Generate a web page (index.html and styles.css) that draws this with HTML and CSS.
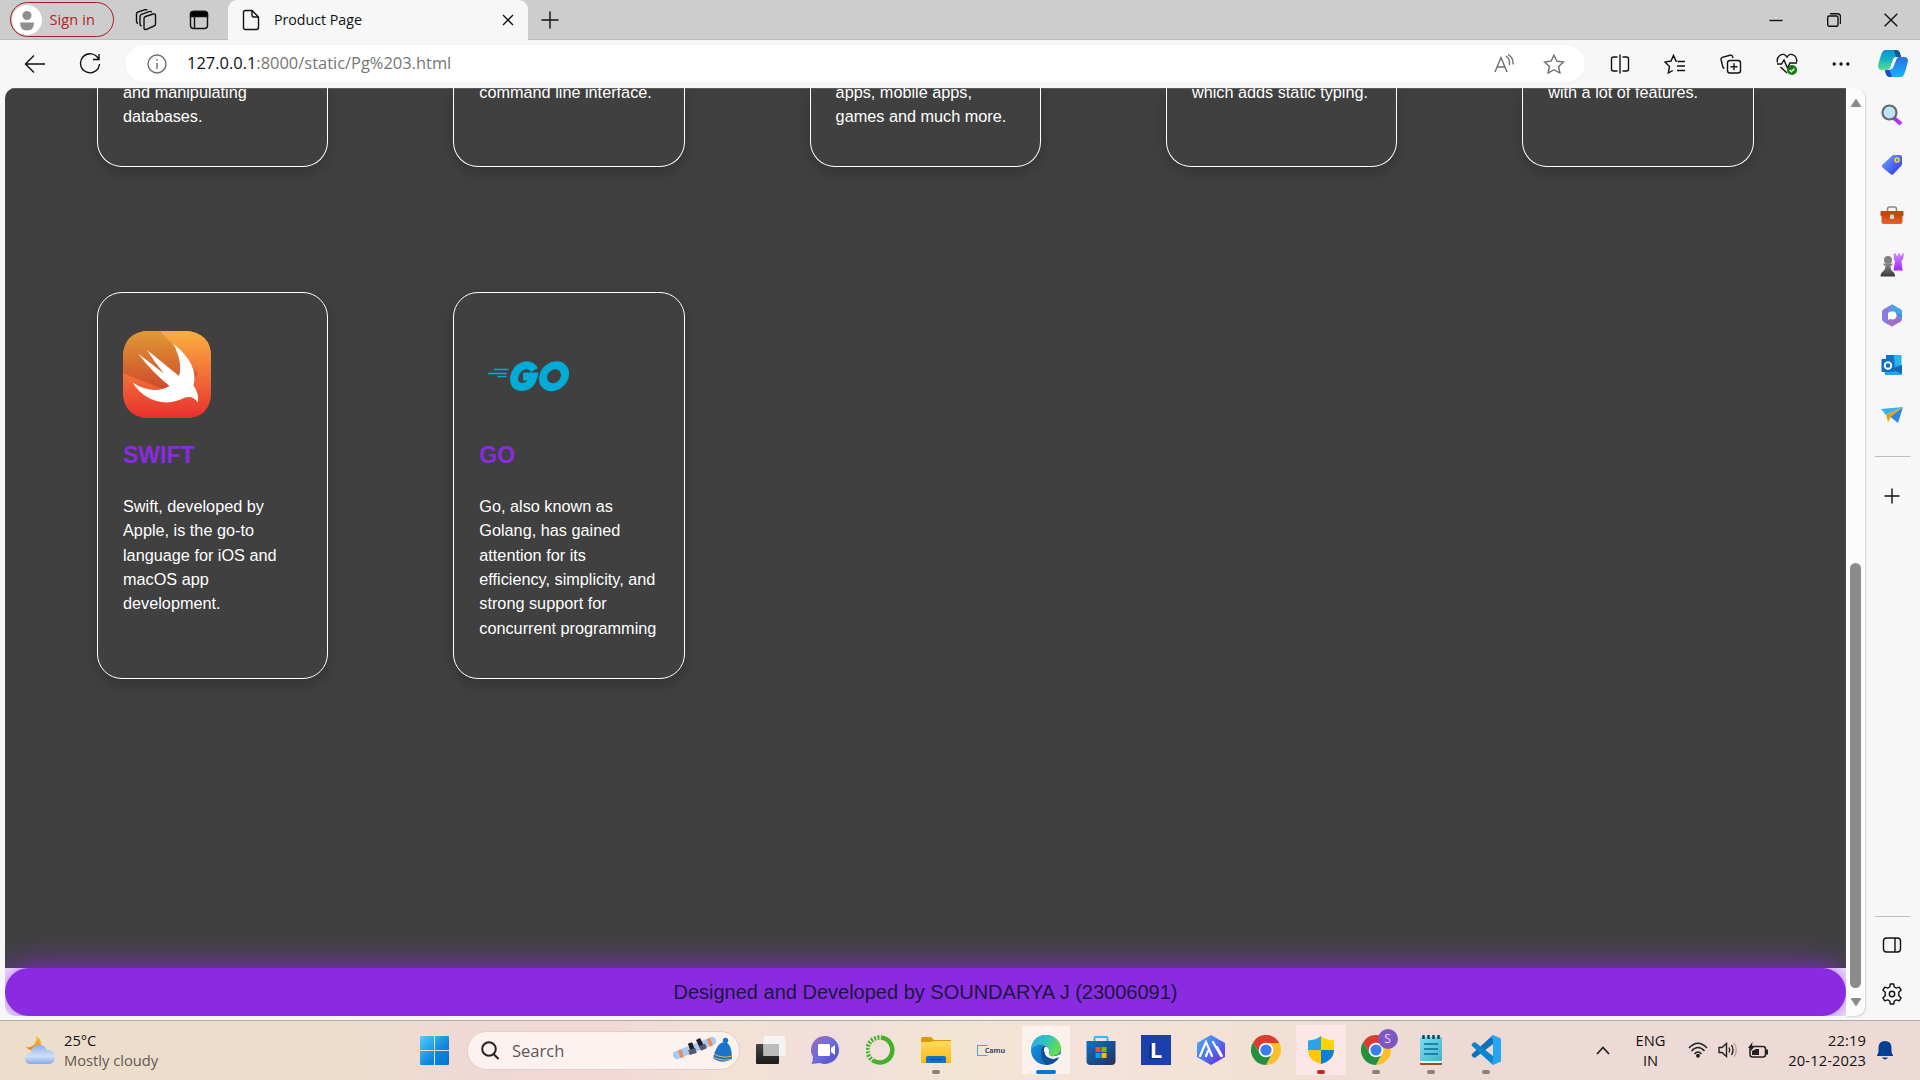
FILE: index.html
```html
<!DOCTYPE html>
<html lang="en">
<head>
<meta charset="utf-8">
<title>Product Page</title>
<link rel="stylesheet" href="styles.css">
</head>
<body>
<svg width="0" height="0" class="defs">
  <defs>
    <linearGradient id="swiftBg" x1="0" y1="0" x2="0" y2="1"><stop offset="0" stop-color="#fbb03f"/><stop offset="1" stop-color="#e9302f"/></linearGradient>
    <linearGradient id="swiftShade" x1="0" y1="0" x2="0" y2="1"><stop offset="0" stop-color="#e09a35"/><stop offset="1" stop-color="#cc3e2a"/></linearGradient>
    <linearGradient id="win" x1="0" y1="0" x2="1" y2="1"><stop offset="0" stop-color="#4fd0fc"/><stop offset=".6" stop-color="#0f86de"/><stop offset="1" stop-color="#0073d0"/></linearGradient>
    <linearGradient id="copA" x1="0" y1="0" x2="0" y2="1"><stop offset="0" stop-color="#0d8fd8"/><stop offset=".5" stop-color="#16b5c0"/><stop offset="1" stop-color="#63dd8e"/></linearGradient>
    <linearGradient id="copB" x1="0" y1="0" x2="0" y2="1"><stop offset="0" stop-color="#2a6fe0"/><stop offset="1" stop-color="#17b3fb"/></linearGradient>
    <linearGradient id="tag" x1="0" y1="0" x2="1" y2="1"><stop offset="0" stop-color="#6fb0ff"/><stop offset="1" stop-color="#2b2bea"/></linearGradient>
    <linearGradient id="box" x1="0" y1="0" x2="0" y2="1"><stop offset="0" stop-color="#c2400f"/><stop offset="1" stop-color="#e8622c"/></linearGradient>
    <linearGradient id="rook" x1="0" y1="0" x2="0" y2="1"><stop offset="0" stop-color="#c98cf8"/><stop offset="1" stop-color="#a822f4"/></linearGradient>
    <linearGradient id="pawn" x1="0" y1="0" x2="0" y2="1"><stop offset="0" stop-color="#8a8a8a"/><stop offset="1" stop-color="#3a3a3a"/></linearGradient>
    <linearGradient id="chat" x1="0" y1="0" x2="1" y2="1"><stop offset="0" stop-color="#a06bb8"/><stop offset=".5" stop-color="#6d6bdc"/><stop offset="1" stop-color="#4a52c4"/></linearGradient>
    <linearGradient id="folder" x1="0" y1="0" x2="0" y2="1"><stop offset="0" stop-color="#ffdb62"/><stop offset="1" stop-color="#fbb80d"/></linearGradient>
    <linearGradient id="edgeTop" x1="0" y1="0" x2="1" y2=".4"><stop offset="0" stop-color="#2aa5e6"/><stop offset=".5" stop-color="#2fc2c4"/><stop offset="1" stop-color="#62de4c"/></linearGradient>
    <linearGradient id="edgeLow" x1="0" y1="0" x2="1" y2="1"><stop offset="0" stop-color="#1a9be8"/><stop offset="1" stop-color="#0c57ac"/></linearGradient>
    <linearGradient id="store" x1="0" y1="0" x2="1" y2="1"><stop offset="0" stop-color="#0e72c4"/><stop offset="1" stop-color="#22305e"/></linearGradient>
    <linearGradient id="hexa" x1="0" y1="0" x2="1" y2="1"><stop offset="0" stop-color="#48b3f4"/><stop offset=".5" stop-color="#4f72f0"/><stop offset="1" stop-color="#6a1de8"/></linearGradient>
    <linearGradient id="cloud" x1="0" y1="0" x2="0" y2="1"><stop offset="0" stop-color="#8fb2ee"/><stop offset=".6" stop-color="#cfdff8"/><stop offset="1" stop-color="#82a8ea"/></linearGradient>
    <linearGradient id="moon" x1="0" y1="0" x2="0" y2="1"><stop offset="0" stop-color="#f8c544"/><stop offset="1" stop-color="#ee8417"/></linearGradient>
    <linearGradient id="note" x1="0" y1="0" x2="1" y2="1"><stop offset="0" stop-color="#7be0f2"/><stop offset="1" stop-color="#3fb3d4"/></linearGradient>
    <linearGradient id="taskDark" x1="0" y1="0" x2="0" y2="1"><stop offset="0" stop-color="#454545"/><stop offset="1" stop-color="#1c1c1c"/></linearGradient>
    <g id="chrome">
      <path d="M15 8H28.300L28 7.500A15 15 0 0 0 2 7.500L8.900 18.500Z" fill="#dd3b30"/>
      <path d="M21.100 18.500 15 30A15 15 0 0 0 28.300 8H15Z" fill="#fcc02c"/>
      <path d="M8.900 18.500 2 7.500A15 15 0 0 0 15 30L21.100 18.500Z" fill="#23913f"/>
      <circle cx="15" cy="15" r="7.300" fill="#fff"/><circle cx="15" cy="15" r="5.600" fill="#3b7ded"/>
    </g>
  </defs>
</svg>

<header class="titlebar">
  <div class="signin">
    <svg width="30" height="30" viewBox="0 0 30 30"><circle cx="15" cy="15" r="15" fill="#fff"/><circle cx="15" cy="10.500" r="4.500" fill="#8f8f8f"/><path d="M8 17.500h14q0 8-7 8t-7-8Z" fill="#8f8f8f"/></svg>
    <span>Sign in</span>
  </div>
  <svg class="ic workspaces" width="22" height="22" viewBox="0 0 22 22"><path d="M9 9.500q0-1.500 1.500-2L18 5q2.500-.700 2.500 1.500V15q0 1.500-1.500 2l-7.500 3.300Q9 21 9 19Z"/><path d="M6.500 17Q5 16.500 5 15V7.500Q5 6 6.500 5.400L14 2.600q2-.600 2.700.700M3 14.500Q1.500 14 1.500 12.500V5Q1.500 3.500 3 3l6.500-2.200q2-.500 2.600.600"/></svg>
  <svg class="ic tabmenu" width="20" height="20" viewBox="0 0 20 20"><rect x="1.500" y="1.500" width="17" height="17" rx="3"/><path d="M1.500 6.500v-2q0-3 3-3h11q3 0 3 3v2Z" fill="#000"/><path d="M5.500 6v12.500"/></svg>
  <div class="tab">
    <svg class="ic" width="18" height="22" viewBox="0 0 18 22"><path d="M3.500 1.500H10l6.500 6.500v10.500q0 2-2 2h-11q-2 0-2-2v-15q0-2 2-2ZM10 1.500V6q0 2 2 2h4.500"/></svg>
    <span>Product Page</span>
    <svg class="ic close" width="12" height="12" viewBox="0 0 12 12"><path d="m1 1 10 10M11 1 1 11"/></svg>
  </div>
  <svg class="ic plus" width="18" height="18" viewBox="0 0 18 18"><path d="M9 .500v17M.500 9h17"/></svg>
  <div class="winbtns">
    <svg class="ic" width="14" height="14" viewBox="0 0 14 14"><path d="M.500 7.500h13"/></svg>
    <svg class="ic" width="14" height="14" viewBox="0 0 14 14"><rect x=".7" y="3" width="10.300" height="10.300" rx="1.500"/><path d="M3 .700h7.500q3 0 3 3V11"/></svg>
    <svg class="ic" width="14" height="14" viewBox="0 0 14 14"><path d="m.700.700 12.600 12.600M13.300.700.700 13.300"/></svg>
  </div>
</header>

<div class="toolbar">
  <svg class="ic back" width="22" height="20" viewBox="0 0 22 20"><path d="M21 10H1.500M10 1.500 1.500 10l8.500 8.500"/></svg>
  <svg class="ic reload" width="22" height="22" viewBox="0 0 22 22"><path d="M19.500 6A9.500 9.500 0 1 0 20.500 11M20 1v5.500h-6"/></svg>
  <div class="address">
    <svg class="ic grey" width="20" height="20" viewBox="0 0 20 20"><circle cx="10" cy="10" r="9"/><path d="M10 9v6M10 5v1.800"/></svg>
    <span class="url"><b>127.0.0.1</b>:8000/static/Pg%203.html</span>
    <svg class="ic grey read" width="20" height="20" viewBox="0 0 20 20"><path d="m1 18 6-14.500L13 18M3 13h8M12 2q4 2.500 3.500 9M14 .500q5.500 3 5 10"/></svg>
    <svg class="ic grey" width="22" height="20" viewBox="0 0 22 20"><path d="m11 1.200 2.900 6 6.500.800-4.800 4.500 1.300 6.500-5.900-3.300-5.900 3.300 1.300-6.500L1.600 8l6.500-.800Z"/></svg>
  </div>
  <div class="tools">
    <svg class="ic" width="20" height="20" viewBox="0 0 20 20"><path d="M7.500 3h-4q-2 0-2 2v10q0 2 2 2h4M12.500 3h4q2 0 2 2v10q0 2-2 2h-4M10 .500v19"/></svg>
    <svg class="ic" width="22" height="20" viewBox="0 0 22 20"><path d="M13.500 7.200 12 7l-2.500-5.600L7 7 1 8l4.500 4.500L4.300 19l4.500-2.500M14 7.500h7M13 12h8M13 16.500h8"/></svg>
    <svg class="ic" width="22" height="20" viewBox="0 0 22 20"><rect x="7.500" y="6.500" width="13" height="12.500" rx="2.500"/><path d="M14 9.300v7M10.500 12.800h7M4.500 14.500 3 13.500 1 5.500q-.300-1.600 1.300-2.200L10 1.200q2-.400 2.500 1l.500 2"/></svg>
    <svg class="ic" width="22" height="22" viewBox="0 0 22 22"><path d="M1.500 9.500Q.500 5 3.500 2.700 8-.500 11 4q3-4.500 7.500-1.300 3 2.300 2 6.300M1 11h4.500L8 7l3.500 8 2.500-5h7M4.500 14 11 20"/><circle cx="16" cy="17" r="5" fill="#107c10" stroke="none"/><path d="m13.700 17 1.600 1.700 3-3" stroke="#fff"/></svg>
    <svg width="18" height="20" viewBox="0 0 18 20"><g fill="#111"><circle cx="2.200" cy="10" r="1.700"/><circle cx="9" cy="10" r="1.700"/><circle cx="15.800" cy="10" r="1.700"/></g></svg>
  </div>
  <svg class="copilot" width="30" height="27" viewBox="0 0 30 27"><path d="M7 0h11q3 0 4 3l1 4h-4q-3 0-4 3l-2.500 7q-1 3-4 3H4q-4 0-4-4Q2 7 4 2.500 5 0 7 0Z" fill="url(#copA)"/><path d="M23 27H12q-3 0-4-3l-1-4h3.500q3 0 4-3L17 10q1-3 4-3h5q4 0 4 4-2 9-4 13.500-1 2.500-3 2.500Z" fill="url(#copB)"/><path d="M16 0h2q3 0 4 3l1 4h-5Z" fill="#12588d"/><path d="M14 27h-2q-3 0-4-3l-1-4h4.500Z" fill="#1c45d4"/><path d="M18 7q-2 0-3 3l-3.500 9.500q3 0 4-3L18.500 9q.5-1.500 2-2Z" fill="#fff"/></svg>
</div>

<div class="middle">
  <main class="page">
    <section class="cards">
      <article class="card cut"><p>and manipulating databases.</p></article>
      <article class="card cut"><p>command line interface.</p></article>
      <article class="card cut"><p>apps, mobile apps, games and much more.</p></article>
      <article class="card cut"><p>which adds static typing.</p></article>
      <article class="card cut"><p>with a lot of features.</p></article>
      <article class="card">
        <svg class="logo" width="88" height="87" viewBox="0 0 88 87"><rect width="88" height="87" rx="25" fill="url(#swiftBg)"/><path d="M25 0H38L75 42 60 66 0 42V25Q1 1 25 0Z" fill="url(#swiftShade)"/><path d="M0 42 40 80 82 66 74 40 37 0H63Q88 2 88 25V62Q87 87 63 87H25Q1 86 0 62Z" fill="url(#swiftBg)"/><path d="M50.500 13Q76 33 70.500 54.500 76 62 75 71.500 70 64 62 66.500 53 71 44 71.500 22 71 9.500 51.500 30 64.500 46.500 55 30 42 15 22.500L37 39.500 41 42.500Q32 32 24 19L56 45Q60 32 50.500 13Z" fill="#fff"/></svg>
        <h3>SWIFT</h3>
        <p>Swift, developed by Apple, is the go-to language for iOS and macOS app development.</p>
      </article>
      <article class="card">
        <svg class="logo" width="98" height="87" viewBox="0 0 98 87"><g stroke="#00acd7" stroke-width="1.700"><path d="M15 38.500h14.500M9 42.500h19M18.500 45.500h9"/></g><g fill="none" stroke="#00acd7" stroke-width="8"><path d="M55.500 39Q52 33 45.500 34.500 36.500 37 35 47 35 56 43.500 56 52.500 55 54.500 45.500H44"/><ellipse cx="75" cy="45.200" rx="10.800" ry="11" transform="translate(8 0) skewX(-10)"/></g></svg>
        <h3>GO</h3>
        <p>Go, also known as Golang, has gained attention for its efficiency, simplicity, and strong support for concurrent programming</p>
      </article>
    </section>
    <footer>Designed and Developed by SOUNDARYA J (23006091)</footer>
  </main>
  <div class="scroll">
    <svg width="12" height="10" viewBox="0 0 12 10"><path d="M6 .500 11 8q.500 1-.500 1h-9Q.500 9 1 8Z" fill="#8b8b8b"/></svg>
    <div class="track"><div class="thumb"></div></div>
    <svg width="12" height="10" viewBox="0 0 12 10"><path d="M6 9.500 11 2q.500-1-.500-1h-9Q.500 1 1 2Z" fill="#8b8b8b"/></svg>
  </div>
  <aside class="side">
    <svg width="22" height="22" viewBox="0 0 22 22"><path d="m13 14 7 6" stroke="#b52ff0" stroke-width="4"/><circle cx="8.500" cy="8.500" r="7" fill="#bfe3fb" stroke="#6a6a6a" stroke-width="2.200"/></svg>
    <svg width="22" height="22" viewBox="0 0 22 22"><path d="M12 1h7q2 0 2 2v7q0 1-1 2l-7.500 8q-1.500 1.500-3 0L1.500 13.500q-1.500-1.500 0-3Z" fill="url(#tag)"/><circle cx="16" cy="6" r="2" fill="#5a7df0" stroke="#ffd22e" stroke-width="1.600"/></svg>
    <svg width="24" height="20" viewBox="0 0 24 20"><path d="M7.500 6V4q0-2 2-2h5q2 0 2 2v2" fill="none" stroke="#8c8c8c" stroke-width="1.600"/><rect x="1.500" y="8" width="21" height="11" rx="2" fill="url(#box)"/><rect x=".5" y="6" width="23" height="5" rx="1" fill="#c9430f"/><rect x="10" y="9.500" width="4" height="4.500" rx="1" fill="#d5d5d5"/></svg>
    <svg width="24" height="24" viewBox="0 0 24 24"><path d="M13.500.500H16v2h1.800v-2h2.500v2H22v-2h2l-1 6-1.500 1L22 15l1 2.500H13.500L15 8l-1-1Z" fill="url(#rook)"/><circle cx="8" cy="7" r="4" fill="#808080"/><path d="M3.500 10.500h9v2h-2q0 4 1.500 5.500 3 1.500 3 5.500H.500q0-4 3-5.500Q5.500 16.500 5.500 12.500h-2Z" fill="url(#pawn)"/></svg>
    <svg width="22" height="23" viewBox="0 0 22 23"><path d="m11 .500 8 4.500q2 1 2 3v7l-6-3.500Q15 8 11 7.500 9 4 11 .500Z" fill="#3d8fe0"/><path d="M21 8v7q0 2-2 3l-8 4.500Q7 20 6 17l9-5.500 6 3.500Z" fill="#a06bc8"/><path d="M11 .500 3 5Q1 6 1 8v7q0 2 2 3l4 2.500Q8 17 7 14V9l6-7Z" fill="#8a7bdc"/><path d="m11 .500 8 4.500q2 1 2 3v3l-10-3.500L8.500 9Q8 4 11 .500Z" fill="#4aa3e8"/><path d="M3 18q4 1 7-3l3 2-2 5.500Z" fill="#9a72c8"/><circle cx="11.500" cy="11.500" r="4" fill="#fff"/></svg>
    <svg width="22" height="22" viewBox="0 0 22 22"><rect x="5" y="1" width="15.500" height="14" rx="1" fill="#28b4ee"/><path d="M5 1h8v8H5Z" fill="#0f72c4"/><path d="M3 11h18v9q0 1-1 1H4Z" fill="#1ea7e8"/><path d="M21 11v9L10 15Z" fill="#1267b8"/><rect x=".5" y="5" width="13" height="13" rx="1" fill="#0b6ec9"/><circle cx="7" cy="11.500" r="3.300" fill="none" stroke="#fff" stroke-width="1.900"/></svg>
    <svg width="22" height="18" viewBox="0 0 22 18"><path d="M0 3 22 1 5 9Z" fill="#35b2f2"/><path d="M22 1 5 9l2 7L10 11Z" fill="#f0a012"/><path d="M22 1 9.500 11 17 17Z" fill="#2c86e6"/></svg>
    <hr>
    <svg class="ic" width="16" height="16" viewBox="0 0 16 16"><path d="M8 .500v15M.500 8h15"/></svg>
    <span class="grow"></span>
    <hr class="low">
    <svg class="ic" width="20" height="18" viewBox="0 0 20 18"><rect x="1.500" y="2" width="17" height="14" rx="3"/><path d="M13 2v14"/></svg>
    <svg class="ic gear" width="22" height="22" viewBox="0 0 22 22"><path d="M9.300 1h3.400l.600 3 2 1.100 3-1 1.800 3-2.300 2.200v3.400l2.300 2.200-1.800 3-3-1-2 1.100-.600 3H9.300l-.600-3-2-1.100-3 1-1.800-3 2.300-2.200V9.300L1.900 7.100l1.800-3 3 1 2-1.100Z" stroke-linejoin="round"/><circle cx="11" cy="11" r="2.700"/></svg>
  </aside>
</div>

<footer class="taskbar">
  <div class="weather">
    <svg width="30" height="30" viewBox="0 0 30 30"><path d="M11.500.500q8 7 2 13-6 4-13-1 11.500 0 11-12Z" fill="url(#moon)"/><path d="M6 29q-6 0-6-5.500 0-5 5.500-5.500 1.500-8 9-8 5.500 0 7.500 5 8 0 8 7 0 7-7 7Z" fill="url(#cloud)"/></svg>
    <div class="lines"><span>25°C</span><span class="dim">Mostly cloudy</span></div>
  </div>
  <svg class="start" width="29" height="29" viewBox="0 0 29 29"><path d="M1 0h13v14H0V1q0-1 1-1ZM15 0h13q1 0 1 1v13H15ZM0 15h14v14H1q-1 0-1-1ZM15 15h14v13q0 1-1 1H15Z" fill="url(#win)"/></svg>
  <div class="search">
    <svg width="18" height="19" viewBox="0 0 18 19" fill="none" stroke="#222" stroke-width="2"><circle cx="8" cy="8" r="6.800"/><path d="m12.500 13 5 5"/></svg>
    <span>Search</span>
    <svg class="ski" width="62" height="28" viewBox="0 0 62 28"><path d="M5 19 40 5" stroke="#a9cbf2" stroke-width="8" stroke-linecap="round"/><path d="m8 14 2 7.500M36.500 2.500l3 7.500" stroke="#ef8a55" stroke-width="3.500"/><path d="m18 7 3 8M26 3l4 8" stroke="#1d1d22" stroke-width="4.500"/><path d="m17 16.500 7-2M28 12.500l6-2.500" stroke="#555b68" stroke-width="5"/><circle cx="53.500" cy="4.500" r="2.700" fill="#1b74cc"/><path d="M41 22Q45 6 53 6q7 2 7 17-10 6-19-1Z" fill="#1b74cc"/><path d="M42 18q9 5 18 2M41 21q9 5 19 2" stroke="#e8b050" fill="none"/></svg>
  </div>
  <div class="apps">
    <div class="app"><svg width="30" height="28" viewBox="0 0 30 28"><rect y="8" width="23" height="20" rx="1" fill="url(#taskDark)"/><rect x="7.500" y="0" width="22" height="20" rx="1" fill="#f5f5f5" opacity=".93"/><path d="M7.500 8H23v12H7.500Z" fill="#bcbcbc"/></svg></div>
    <div class="app"><svg width="30" height="30" viewBox="0 0 30 30"><path d="M15.500 1A14 14 0 1 1 9 28L.500 29Q2 26 2 22A14 14 0 0 1 15.500 1Z" fill="url(#chat)"/><rect x="7" y="9" width="12" height="12" rx="1.500" fill="#fff"/><path d="m20 13 4-3v10l-4-3Z" fill="#fff"/></svg></div>
    <div class="app"><svg width="30" height="30" viewBox="0 0 30 30" fill="none" stroke="#43b02a"><path d="M15 2.500A12.500 12.500 0 1 1 8 26" stroke-width="4.500"/><path d="M8 26A12.500 12.500 0 0 1 15 2.500" stroke-width="4.500" stroke-dasharray="2 1.400"/></svg></div>
    <div class="app"><svg width="30" height="26" viewBox="0 0 30 26"><path d="M0 2Q0 0 2 0h8l3 3h17v6H0Z" fill="#dc9a09"/><path d="M0 5h10l3-1h16q1 0 1 1v21H0Z" fill="url(#folder)"/><path d="M5 26v-5q0-2 2-2h16q2 0 2 2v5Z" fill="#0e72cc"/><path d="M9 22.500h12" stroke="#0a4f92"/></svg><i class="run"></i></div>
    <div class="app"><span class="camu"><i></i>Camu</span></div>
    <div class="app on"><svg width="30" height="30" viewBox="0 0 30 30"><circle cx="15" cy="15" r="15" fill="url(#edgeLow)"/><path d="M0 14Q2 0 15 0 28 1 30 13q0 7-8 8-6 0-5-3 2-3-1-6-7-6-16 2Z" fill="url(#edgeTop)"/><path d="M10 16q0-5 5-5 4 2 3 6-2 2 2 4 4 1 9-2-1 5-7 9Q10 27 10 16Z" fill="#10519c"/><path d="M15 11.500q4 1.500 3 5.500-1 2 2 4 4 1 9.500-2l.500 3-6 2.500Q14 24 13 16q-.500-4 2-4.500Z" fill="#fbf3f0"/><path d="M13 16q1 8 10 8l5-2Q24 29 16 30q-6-4-6-12 0-3 3-6Z" fill="#10519c"/></svg><i class="run blue"></i></div>
    <div class="app"><svg width="30" height="29" viewBox="0 0 30 29"><path d="M8.500 6V2q0-1 1-1h11q1 0 1 1v4" fill="none" stroke="#29bdf2" stroke-width="2"/><path d="M.500 5h29v20q0 4-4 4h-21q-4 0-4-4Z" fill="url(#store)"/><path d="M9.500 11h5v5h-5Z" fill="#f25022"/><path d="M15.500 11h5v5h-5Z" fill="#7fba00"/><path d="M9.500 17h5v5h-5Z" fill="#00a4ef"/><path d="M15.500 17h5v5h-5Z" fill="#ffb900"/></svg></div>
    <div class="app"><span class="ell">L</span></div>
    <div class="app"><svg width="28" height="30" viewBox="0 0 28 30"><path d="M14 0 28 8v14l-14 8L0 22V8Z" fill="url(#hexa)"/><path d="m3 21 6-14 6 14M9 21l2-5M16 7l8 14M20 12l5 9" fill="none" stroke="#fff" stroke-width="2.200" stroke-linecap="round"/></svg></div>
    <div class="app"><svg width="30" height="30" viewBox="0 0 30 30"><use href="#chrome"/></svg></div>
    <div class="app alert"><svg width="26" height="28" viewBox="0 0 26 28"><path d="M13 0Q8 4 0 4.500V14h13Z" fill="#2ba3e4"/><path d="M13 0q5 4 13 4.500V14H13Z" fill="#ffd400"/><path d="M0 14q0 10 13 14V14Z" fill="#ffc800"/><path d="M26 14q0 10-13 14V14Z" fill="#0c7fd6"/></svg><i class="run red"></i></div>
    <div class="app"><svg width="30" height="30" viewBox="0 0 30 30"><use href="#chrome"/></svg><span class="badge">S</span><i class="run"></i></div>
    <div class="app"><svg width="22" height="30" viewBox="0 0 22 30"><rect y="25" width="22" height="5" rx="1" fill="#a24d0e"/><rect y="3" width="22" height="25" rx="1" fill="#f0f0f0"/><rect y="2" width="22" height="24" rx="1" fill="url(#note)"/><path d="M4 9h14M4 14h14M4 19h14" stroke="#0d6c8c" stroke-width="1.700"/><path d="M3.500 0v4M8.500 0v4M13.500 0v4M18.500 0v4" stroke="#0c4a63" stroke-width="2.500"/></svg><i class="run"></i></div>
    <div class="app"><svg width="30" height="30" viewBox="0 0 30 30"><path d="M22 0 1 19q-1 1 0 2l1.500 1.500q1 .500 2 0L22 9Z" fill="#0f6fb8"/><path d="M22 30 1 11q-1-1 0-2l1.500-1.500q1-.500 2 0L22 21Z" fill="#0a85cf"/><path d="m22 0 7 3q1 .500 1 1.500v21q0 1-1 1.500l-7 3-2-2 2-2V4l-2-2Z" fill="#27a4f2"/></svg><i class="run"></i></div>
  </div>
  <div class="tray">
    <svg class="chev" width="14" height="9" viewBox="0 0 14 9" fill="none" stroke="#222" stroke-width="1.800"><path d="m1 8 6-6.500L13 8"/></svg>
    <div class="lines mid lang"><span>ENG</span><span>IN</span></div>
    <svg width="20" height="16" viewBox="0 0 20 16" fill="none" stroke="#222" stroke-width="1.500"><path d="M1 6q9-9.500 18 0M3.500 9q6.500-7 13 0M6.500 12q3.500-4 7 0"/><circle cx="10" cy="13.700" r="1.200" fill="#222"/></svg>
    <svg width="20" height="16" viewBox="0 0 20 16" fill="none" stroke="#222" stroke-width="1.400"><path d="M1 5.500h3L8.500 1.500v13L4 10.500H1Z"/><path d="M11 5.500q1.500 2.500 0 5M13.500 3q3 5 0 10"/><path d="M16 .800q4.500 7.200 0 14.400" stroke="#b5a8a5"/></svg>
    <svg width="21" height="16" viewBox="0 0 21 16"><rect x="2" y="4.500" width="15.500" height="10.500" rx="2.500" fill="none" stroke="#222" stroke-width="1.500"/><path d="M4 13V9l4-2h3v6ZM18 7.500h2v5h-2ZM4.500 0 0 6h3L2 10l5-6H4Z" fill="#222"/></svg>
    <div class="lines end clock"><span>22:19</span><span>20-12-2023</span></div>
    <svg class="bell" width="16" height="19" viewBox="0 0 16 19"><path d="M8 0q6.500 0 6.500 7v4L16 14.500V15H0v-.500L1.500 11V7Q1.500 0 8 0ZM5 16.500h6q-3 4-6 0Z" fill="#003f92"/></svg>
  </div>
</footer>
</body>
</html>
```
FILE: styles.css
```css
* { box-sizing: border-box; }
body {
  margin: 0;
  width: 1920px;
  height: 1080px;
  overflow: hidden;
  background: #f7f7f7;
  display: flex;
  flex-direction: column;
  font-family: "Open Sans", "Noto Sans", sans-serif;
  color: #111;
}
svg { display: block; flex: none; }
.defs { position: absolute; }
.ic { fill: none; stroke: #111; stroke-width: 1.4; }
.grey { stroke: #6e6e6e; }

/* title bar */
.titlebar {
  height: 40px;
  flex: none;
  display: flex;
  align-items: center;
  background: #cdcdcd;
  box-shadow: inset 0 -1px #bdbdbd;
  padding: 0 0 1px 10px;
}
.signin {
  width: 104px;
  height: 35px;
  border: 1.5px solid #a91b22;
  border-radius: 18px;
  display: flex;
  align-items: center;
  gap: 7.500px;
  padding-left: 1px;
  color: #b0232a;
  font-size: 14.500px;
  letter-spacing: .1px;
}
.workspaces { margin-left: 21px; }
.tabmenu { margin-left: 32px; }
.tab {
  width: 300px;
  height: 40px;
  align-self: flex-start;
  margin-left: 19px;
  background: #f7f7f7;
  border-radius: 9px 9px 0 0;
  display: flex;
  align-items: center;
  padding: 0 14px 1px;
  font-size: 14.200px;
}
.tab span { margin-left: 14px; flex: 1; }
.plus { margin-left: 12.500px; }
.winbtns { margin-left: auto; display: flex; gap: 43.500px; padding-right: 22px; }

/* toolbar */
.toolbar { height: 48px; flex: none; display: flex; align-items: center; padding-bottom: 1px; }
.back { margin-left: 24px; }
.reload { margin-left: 33px; }
.address {
  width: 1460px;
  height: 37px;
  margin-left: 24px;
  border-radius: 19px;
  background: #fff;
  display: flex;
  align-items: center;
  padding: 0 20px 0 22px;
  box-shadow: 0 0 3px #ececec;
}
.url { font-size: 16.450px; line-height: 22px; padding-bottom: 1px; margin-left: 20px; color: #767676; }
.url b { font-weight: 400; color: #111; }
.read { margin: 0 29px 0 auto; }
.tools { display: flex; align-items: center; gap: 34px; margin-left: 24.500px; }
.copilot { margin-left: 28.500px; }

/* viewport */
.middle { height: 932px; flex: none; display: flex; padding: 0 0 4px 5px; }
.page {
  width: 1841px;
  height: 928px;
  background: #fff;
  border-radius: 10px 0 0 10px;
  overflow: hidden;
  display: flex;
  flex-direction: column;
  font-family: "Liberation Sans", Arial, sans-serif;
}
.cards {
  height: 880px;
  flex: none;
  background: #404040;
  box-shadow: inset 0 1px #5a5a5a;
  padding: 0 92.500px 0 92px;
  display: grid;
  grid-template-columns: repeat(5, 1fr);
  grid-template-rows: 79px 387px;
  gap: 125px;
}
.card {
  border: 1px solid #fff;
  border-radius: 25px;
  padding: 38px 0 0 25px;
  box-shadow: 0 5px 15px rgba(0, 0, 0, .22);
  color: #fff;
}
.card p { margin: 0; width: 180px; font-size: 16.250px; line-height: 24.375px; }
.cut { border-top: 0; border-radius: 0 0 25px 25px; padding-top: 0; }
.cut p { margin-top: -8px; }
.card h3 { margin: 24.400px 0; font-size: 23px; line-height: 27px; color: #8a2be2; }
.page footer {
  position: relative;
  height: 48px;
  flex: none;
  border-radius: 25px;
  background: #8a2be2;
  box-shadow: 0 0 31px #8a2be2;
  display: flex;
  align-items: center;
  justify-content: center;
  font-size: 20px;
  color: #1b1740;
}
.scroll {
  width: 19px;
  height: 928px;
  background: #fcfcfc;
  border-radius: 0 10px 10px 0;
  box-shadow: 1px 1px 2px #d4d4d4;
  display: flex;
  flex-direction: column;
  align-items: center;
  padding: 10px 0 9px;
}
.track { flex: 1; display: flex; align-items: flex-end; padding-bottom: 9px; }
.thumb { width: 11px; height: 425px; border-radius: 6px; background: #8b8b8b; }

/* sidebar */
.side {
  width: 54px;
  padding-top: 2px;
  display: grid;
  grid-template-rows: repeat(7, 50px) 32px 47px 1fr 29px 27px 74px;
  justify-items: center;
  align-items: center;
  height: 944px;
  margin-bottom: -16px;
}
.side hr { width: 35px; height: 1px; border: 0; margin: 0; background: #bdbdbd; }
.gear { margin-bottom: 2px; }

/* taskbar */
.taskbar {
  height: 60px;
  flex: none;
  display: flex;
  align-items: center;
  box-shadow: inset 0 1px #b5aba8;
  background: linear-gradient(90deg, #eddecb 0, #eddecb 330px, #f0d8d5 480px, #f2d9d8 620px, #f3e2d3 730px, #f0dedb 830px, #f3e5d3 960px, #f5e2da 1090px, #f2e1d3 1240px, #ecd8d5 1500px, #eedad5 100%);
}
.lines { display: flex; flex-direction: column; font-size: 14.700px; line-height: 20px; white-space: nowrap; }
.mid { align-items: center; }
.end { align-items: flex-end; }
.dim { color: #5e5a55; }
.weather { width: 420px; padding-left: 25px; display: flex; align-items: center; gap: 9px; }
.search {
  width: 273px;
  height: 39px;
  margin-left: 18px;
  border-radius: 20px;
  background: #fcf3f1;
  border: 1px solid #e3cdca;
  display: flex;
  align-items: center;
  padding: 0 5px 0 13px;
  color: #5d5755;
  font-size: 16.500px;
}
.search span { margin-left: 13px; flex: 1; }
.apps { display: flex; margin-left: 3.500px; }
.app { width: 55px; height: 60px; display: grid; place-items: center; position: relative; }
.on, .alert { background: #fbf1ed; background-clip: content-box; padding: 6px 3.500px; }
.alert { background-color: #fde6e7; padding: 5px 2.500px; }
.run { position: absolute; left: 23.500px; bottom: 6px; width: 8px; height: 4px; border-radius: 2px; background: #8a817d; }
.blue { left: 17.500px; width: 20px; background: #0078d4; }
.red { background: #c42b1c; }
.camu { display: flex; align-items: center; font-size: 7.200px; line-height: 10px; font-weight: 700; color: #3a4668; }
.camu i { width: 11px; height: 11px; border: 1px solid #38aee0; border-right-color: transparent; margin-right: -3px; }
.ell { width: 30px; height: 30px; background: #1c3fae; color: #fff; font-size: 22px; line-height: 29px; font-weight: 700; text-align: center; text-shadow: -2px 1px #0a2868; }
.badge { position: absolute; left: 29px; top: 9px; width: 20px; height: 20px; border-radius: 50%; background: #7e57c2; color: #e6dcf6; font-size: 12px; line-height: 20px; text-align: center; }
.tray { display: flex; align-items: center; flex: 1; }
.chev { margin-left: 82px; }
.lang { width: 32px; margin: 0 21px 0 25px; }
.tray svg + svg { margin-left: 10px; }
.clock { margin-left: auto; letter-spacing: .1px; }
.bell { margin: 0 27px 0 11px; }
```
